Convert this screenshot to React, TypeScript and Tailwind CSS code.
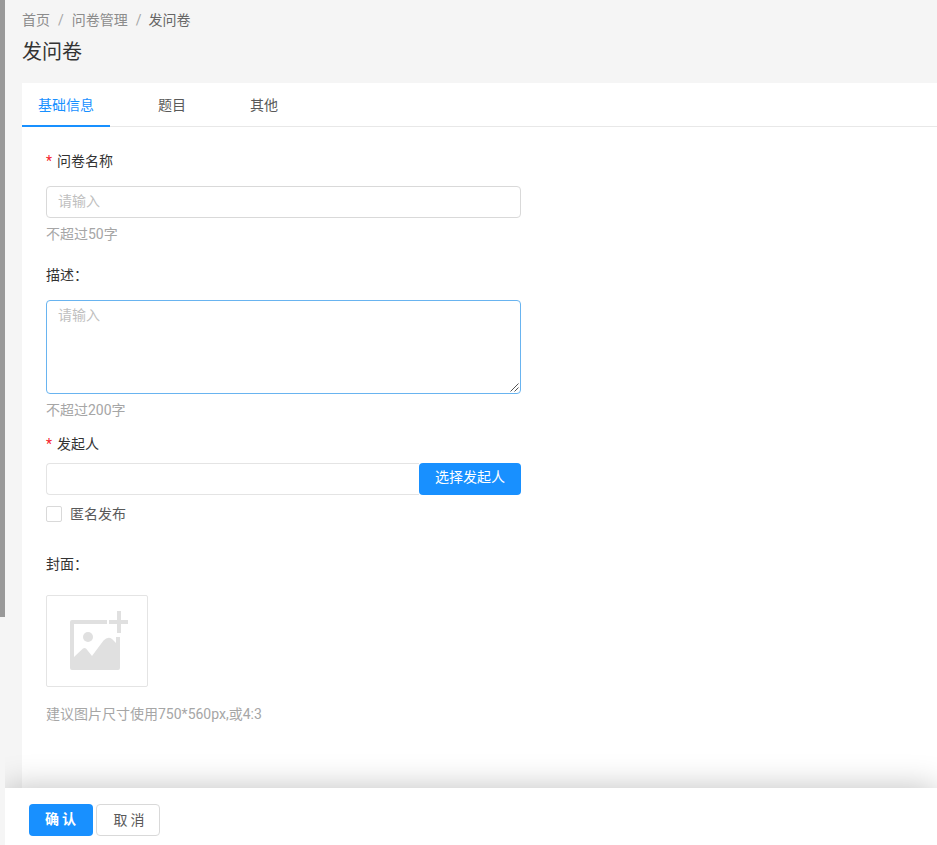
import React from "react";

const font = { fontFamily: '"Roboto", "Noto Sans CJK SC", sans-serif' };

function Star() {
  return <span className="text-[#f5222d] mr-[5px]">*</span>;
}

function ImagePlaceholder() {
  return (
    <svg width="60" height="60" viewBox="0 0 60 60" fill="none">
      <path
        d="M2 10H37V14H4V47L13 38.500Q14.500 37.500 16 38.500L22 46L33.500 30.500Q38 26 42 29L46 33V27H50V58A2 2 0 0 1 48 60H2A2 2 0 0 1 0 58V12A2 2 0 0 1 2 10Z"
        fill="#e0e0e0"
      />
      <circle cx="18" cy="27" r="5" fill="#e0e0e0" />
      <path d="M47 1H51V10H58V14H51V23H47V14H39V10H47Z" fill="#e0e0e0" />
    </svg>
  );
}

export default function App() {
  return (
    <div className="flex h-[845px] w-[937px] overflow-hidden bg-[#f5f5f5]" style={font}>
      <div className="relative z-10 w-[5px] shrink-0 bg-[#f5f5f5]">
        <div className="h-[617px] w-[5px] bg-[#999999]" />
      </div>
      <div className="flex min-w-0 flex-1 flex-col">
        <div className="h-[83px] shrink-0 px-[17px] pt-[10px]">
          <div className="flex h-[21px] items-center text-[14px] leading-[21px] text-[#8c8c8c]">
            <span>首页</span>
            <span className="mx-[8px] text-[#a6a6a6]">/</span>
            <span>问卷管理</span>
            <span className="ml-[8px] mr-[7px] text-[#a6a6a6]">/</span>
            <span className="text-[#666666]">发问卷</span>
          </div>
          <div className="mt-[5px] text-[20px] leading-[32px] text-[#333333]">发问卷</div>
        </div>
        <div className="ml-[17px] flex-1 bg-white">
          <div className="flex h-[44px] border-b border-[#e8e8e8] text-[14px]">
            <div className="h-[44px] w-[88px] border-b-2 border-[#1890ff] pt-[11px] text-center leading-[22px] text-[#1890ff]">基础信息</div>
            <div className="ml-[48px] pt-[11px] leading-[22px] text-[#595959]">题目</div>
            <div className="ml-[64px] pt-[11px] leading-[22px] text-[#595959]">其他</div>
          </div>
          <div className="w-[499px] pl-[24px] text-[14px] text-[#333333]">
            <div className="mt-[23px] h-[22px] leading-[22px]"><Star />问卷名称</div>
            <div className="mt-[14px] h-[32px] rounded-[4px] border border-[#d9d9d9] px-[11px] leading-[28px] text-[#bfbfbf]">请输入</div>
            <div className="mt-[5px] h-[22px] leading-[22px] text-[#a6a6a6]">不超过50字</div>
            <div className="mt-[19px] h-[22px] leading-[22px]">描述：</div>
            <div className="relative mt-[14px] h-[94px] rounded-[4px] border border-[#69b4f0] px-[11px] pt-[3px] leading-[22px] text-[#bfbfbf]">
              请输入
              <svg className="absolute bottom-[1px] right-[1px]" width="9" height="9" viewBox="0 0 9 9" stroke="#555" strokeWidth="1" fill="none">
                <path d="M8.500 0.500 L0.500 8.500 M8.500 4.500 L4.500 8.500" />
              </svg>
            </div>
            <div className="mt-[5px] h-[22px] leading-[22px] text-[#a6a6a6]">不超过200字</div>
            <div className="mt-[12px] h-[22px] leading-[22px]"><Star />发起人</div>
            <div className="mt-[8px] flex h-[32px]">
              <div className="min-w-0 flex-1 rounded-l-[4px] border border-r-0 border-[#e4e4e4]" />
              <div className="w-[102px] shrink-0 rounded-[4px] bg-[#1890ff] text-center text-[14px] leading-[28px] text-white">选择发起人</div>
            </div>
            <div className="mt-[8px] flex h-[22px] items-center text-[#595959]">
              <span className="mr-[8px] h-[16px] w-[16px] rounded-[2px] border border-[#d9d9d9] bg-white" />
              匿名发布
            </div>
            <div className="mt-[28px] h-[22px] leading-[22px]">封面：</div>
            <div className="mt-[20px] h-[92px] w-[102px] rounded-[2px] border border-[#e4e4e4] pl-[23px] pt-[14px]">
              <ImagePlaceholder />
            </div>
            <div className="mt-[16px] h-[22px] whitespace-nowrap leading-[22px] text-[#a6a6a6]">建议图片尺寸使用750*560px,或4:3</div>
          </div>
        </div>
        <div className="relative flex h-[57px] shrink-0 items-start gap-[3px] bg-white pl-[24px] pt-[16px] shadow-[0_0_32px_rgba(0,0,0,0.25)]">
          <div className="h-[32px] w-[64px] rounded-[4px] bg-[#1890ff] pl-[2px] text-center text-[14px] font-bold leading-[30px] tracking-[3px] text-white">确认</div>
          <div className="h-[32px] w-[64px] rounded-[4px] border border-[#d9d9d9] bg-white pl-[5px] text-center text-[14px] leading-[30px] tracking-[3px] text-[#595959]">取消</div>
        </div>
      </div>
    </div>
  );
}
